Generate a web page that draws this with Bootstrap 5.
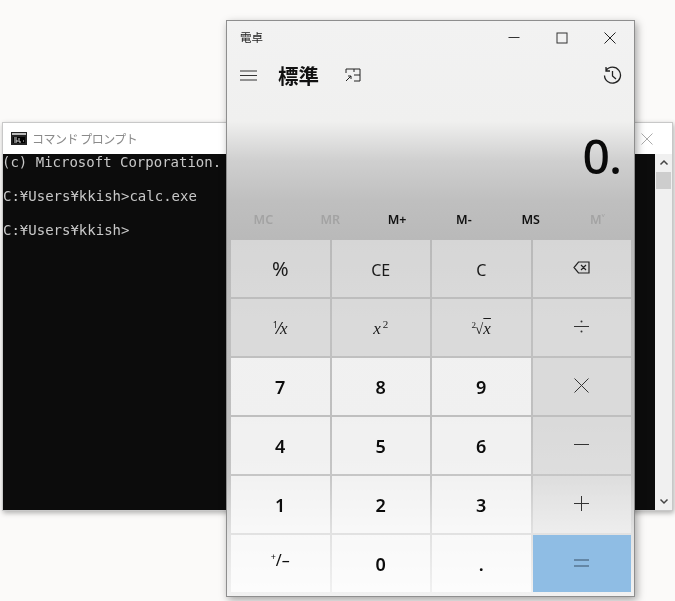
<!DOCTYPE html>
<html lang="ja">
<head>
<meta charset="utf-8">
<title>電卓</title>
<link href="https://cdn.jsdelivr.net/npm/bootstrap@5.3.0/dist/css/bootstrap.min.css" rel="stylesheet">
<style>
html,body{margin:0;height:100%;background:#fbfaf9}
.desk{position:relative;width:675px;height:601px;background:#fbfaf9;overflow:hidden;font-family:"Noto Sans","Noto Sans CJK JP",sans-serif;color:#111;filter:blur(.35px)}
.console-win{position:absolute;left:2px;top:122px;width:671px;height:389px;background:#fff;border:1px solid #c8c8c8;box-shadow:1px 2px 5px rgba(0,0,0,.3)}
.console-bar{height:31px;padding-left:8px;gap:5px;font-family:"Noto Sans CJK JP",sans-serif;font-size:12px;color:#8a8a8a;letter-spacing:-.5px}
.console-x{margin-left:auto;width:50px;height:31px;color:#aaa}
.console-main{height:356px}
.console-text{flex:1;background:#0c0c0c;color:#c8c8c8;font-family:"DejaVu Sans Mono",monospace;font-size:14px;line-height:17px;white-space:pre;margin:0;padding:0;overflow:hidden;text-indent:-1px}
.console-scroll{width:17px;background:#f0f0f0}
.sc-thumb{height:17px;background:#cdcdcd;margin:1px}
.sc-end{height:17px}
.calc-win{position:absolute;left:226px;top:20px;width:409px;height:577px;border:1px solid #8e8e8e;box-shadow:2px 3px 8px rgba(0,0,0,.35);background:linear-gradient(180deg,#f2f2f2 0,#f0f0ef 100px,#cfcfcf 140px,#bfbfbf 180px,#b9b9b9 220px,#c0c0c0 310px,#bfbfbf 396px,#c6c6c6 456px,#e2e2e2 513px,#f2f2f2 577px)}
.calc-title{height:33px;padding-left:13px;font-size:11.5px;color:#222}
.win-btns{margin-left:auto}
.win-btn{width:48px;height:33px}
.calc-head{height:42px;padding-left:13px;padding-right:12px}
.calc-mode{font-size:20.5px;font-weight:700;margin-left:21px;line-height:1;font-family:"Noto Sans CJK JP",sans-serif;color:#111}
.calc-keep{margin-left:26px}
.calc-hist{margin-left:auto}
.calc-display{height:102px;padding-right:13px;font-size:48px;font-weight:500;line-height:1;color:#0a0a0a;padding-top:36px;letter-spacing:-1px;font-family:"Noto Sans",sans-serif}
.mem-row{height:42px;padding:3px 3px 0;font-size:12.5px;font-weight:600}
.mem-key{flex:1;text-align:center}
.mem-off{color:#a3a3a3}
.key-grid{display:grid;grid-template-columns:repeat(4,98.5px);grid-auto-rows:57px;gap:2px;padding:0 4px}
.key-cell{display:flex;align-items:center;justify-content:center;font-size:16px;color:#1a1a1a;padding-top:2px}
.key-fn{background:rgba(255,255,255,.42)}
.key-num{background:rgba(255,255,255,.77);font-size:18px;font-weight:600;color:#0c0c0c}
.key-eq{background:#8fbde4}
.key-pct{font-size:20px;padding-top:0}
.key-ico{padding-top:0;padding-bottom:2px}
.key-sign{font-weight:400;font-size:16px;padding-top:0;padding-bottom:8px}
.math{font-family:"Liberation Serif",serif;font-style:italic;font-size:17px}
.math-sup{font-size:11px;vertical-align:6px;font-style:normal;margin-left:2px}
.sup-left{font-size:9px;vertical-align:6px;font-style:normal}
.root-sign{margin-left:-1px;font-style:normal;font-size:15px}
.root-x{text-decoration:overline}
</style>
</head>
<body>
<div class="desk">
  <div class="console-win">
    <div class="console-bar d-flex align-items-center">
      <svg width="16" height="13" viewBox="0 0 16 13"><rect width="16" height="13" fill="#222"/><rect x="1" y="1" width="14" height="2" fill="#bbb"/><rect x="2" y="5" width="12" height="6" fill="#000"/><path d="M3 6h3M3 8h3v2H3M8 6v4h2M12 9h1" stroke="#ddd" fill="none"/></svg>
      <span>コマンド プロンプト</span>
      <span class="console-x d-flex align-items-center justify-content-center"><svg width="12" height="12" viewBox="0 0 12 12"><path d="M.5.5l11 11M11.500.5l-11 11" stroke="#aaa" fill="none"/></svg></span>
    </div>
    <div class="console-main d-flex">
      <pre class="console-text">(c) Microsoft Corporation.

C:¥Users¥kkish&gt;calc.exe

C:¥Users¥kkish&gt;</pre>
      <div class="console-scroll d-flex flex-column">
        <div class="sc-end d-flex align-items-center justify-content-center"><svg width="10" height="7" viewBox="0 0 10 7"><path d="M1.500 5.500L5 2l3.500 3.500" stroke="#444" stroke-width="1.500" fill="none"/></svg></div>
        <div class="sc-thumb"></div>
        <div class="flex-grow-1"></div>
        <div class="sc-end d-flex align-items-center justify-content-center"><svg width="10" height="7" viewBox="0 0 10 7"><path d="M1.500 1.500L5 5l3.500-3.500" stroke="#444" stroke-width="1.500" fill="none"/></svg></div>
      </div>
    </div>
  </div>

  <div class="calc-win">
    <div class="calc-title d-flex align-items-center">
      <span>電卓</span>
      <div class="win-btns d-flex">
        <span class="win-btn d-flex align-items-center justify-content-center"><svg width="12" height="12" viewBox="0 0 12 12"><path d="M.5 5.500h11" stroke="#333" fill="none"/></svg></span>
        <span class="win-btn d-flex align-items-center justify-content-center"><svg width="12" height="12" viewBox="0 0 12 12"><rect x="1" y="1" width="10" height="10" stroke="#333" fill="none"/></svg></span>
        <span class="win-btn d-flex align-items-center justify-content-center"><svg width="12" height="12" viewBox="0 0 12 12"><path d="M.5.5l11 11M11.500.5l-11 11" stroke="#222" fill="none"/></svg></span>
      </div>
    </div>
    <div class="calc-head d-flex align-items-center">
      <svg width="17" height="11" viewBox="0 0 17 11"><path d="M0 1h17M0 5.500h17M0 10h17" stroke="#333" stroke-width="1" fill="none"/></svg>
      <span class="calc-mode">標準</span>
      <svg class="calc-keep" width="16" height="14" viewBox="0 0 16 14"><path d="M5 1h10v12H9M15 7H9M9 1v3M1 5V1h4M1 13l5-5M3 8h3v3" stroke="#222" fill="none"/></svg>
      <svg class="calc-hist" width="19" height="19" viewBox="0 0 19 19"><path d="M3 4.500A8 8 0 1 1 1.500 9.500M3 1v4h4M9.500 5v5l3.500 3" stroke="#222" stroke-width="1.300" fill="none"/></svg>
    </div>
    <div class="calc-display text-end">0.</div>
    <div class="mem-row d-flex align-items-center">
      <span class="mem-key mem-off">MC</span><span class="mem-key mem-off">MR</span><span class="mem-key">M+</span><span class="mem-key">M-</span><span class="mem-key">MS</span><span class="mem-key mem-off">M˅</span>
    </div>
    <div class="key-grid">
      <div class="key-cell key-fn key-pct">%</div>
      <div class="key-cell key-fn">CE</div>
      <div class="key-cell key-fn">C</div>
      <div class="key-cell key-fn key-ico"><svg width="17" height="13" viewBox="0 0 17 13"><path d="M16 1H5.500L1 6.500 5.500 12H16zM8 4l5 5M13 4l-5 5" stroke="#222" stroke-width="1.200" fill="none"/></svg></div>
      <div class="key-cell key-fn"><span><span class="sup-left">1</span>⁄<span class="math">x</span></span></div>
      <div class="key-cell key-fn"><span class="math">x<span class="math-sup">2</span></span></div>
      <div class="key-cell key-fn"><span class="math"><span class="sup-left">2</span><span class="root-sign">√</span><span class="root-x">x</span></span></div>
      <div class="key-cell key-fn key-ico"><svg width="15" height="13" viewBox="0 0 15 13"><path d="M0 6.500h15" stroke="#333" fill="none"/><circle cx="7.500" cy="1.500" r="1" fill="#333"/><circle cx="7.500" cy="11.500" r="1" fill="#333"/></svg></div>
      <div class="key-cell key-num">7</div>
      <div class="key-cell key-num">8</div>
      <div class="key-cell key-num">9</div>
      <div class="key-cell key-fn key-ico"><svg width="15" height="15" viewBox="0 0 15 15"><path d="M.5.500l14 14M14.500.500l-14 14" stroke="#333" fill="none"/></svg></div>
      <div class="key-cell key-num">4</div>
      <div class="key-cell key-num">5</div>
      <div class="key-cell key-num">6</div>
      <div class="key-cell key-fn key-ico"><svg width="15" height="3" viewBox="0 0 15 3"><path d="M0 1.500h15" stroke="#333" fill="none"/></svg></div>
      <div class="key-cell key-num">1</div>
      <div class="key-cell key-num">2</div>
      <div class="key-cell key-num">3</div>
      <div class="key-cell key-fn key-ico"><svg width="15" height="15" viewBox="0 0 15 15"><path d="M0 7.500h15M7.500 0v15" stroke="#333" fill="none"/></svg></div>
      <div class="key-cell key-num key-sign"><span><span class="sup-left">+</span>/–</span></div>
      <div class="key-cell key-num">0</div>
      <div class="key-cell key-num">.</div>
      <div class="key-cell key-eq key-ico"><svg width="15" height="8" viewBox="0 0 15 8"><path d="M0 1h15M0 7h15" stroke="#3b5368" stroke-width="1.200" fill="none"/></svg></div>
    </div>
  </div>
</div>
</body>
</html>
